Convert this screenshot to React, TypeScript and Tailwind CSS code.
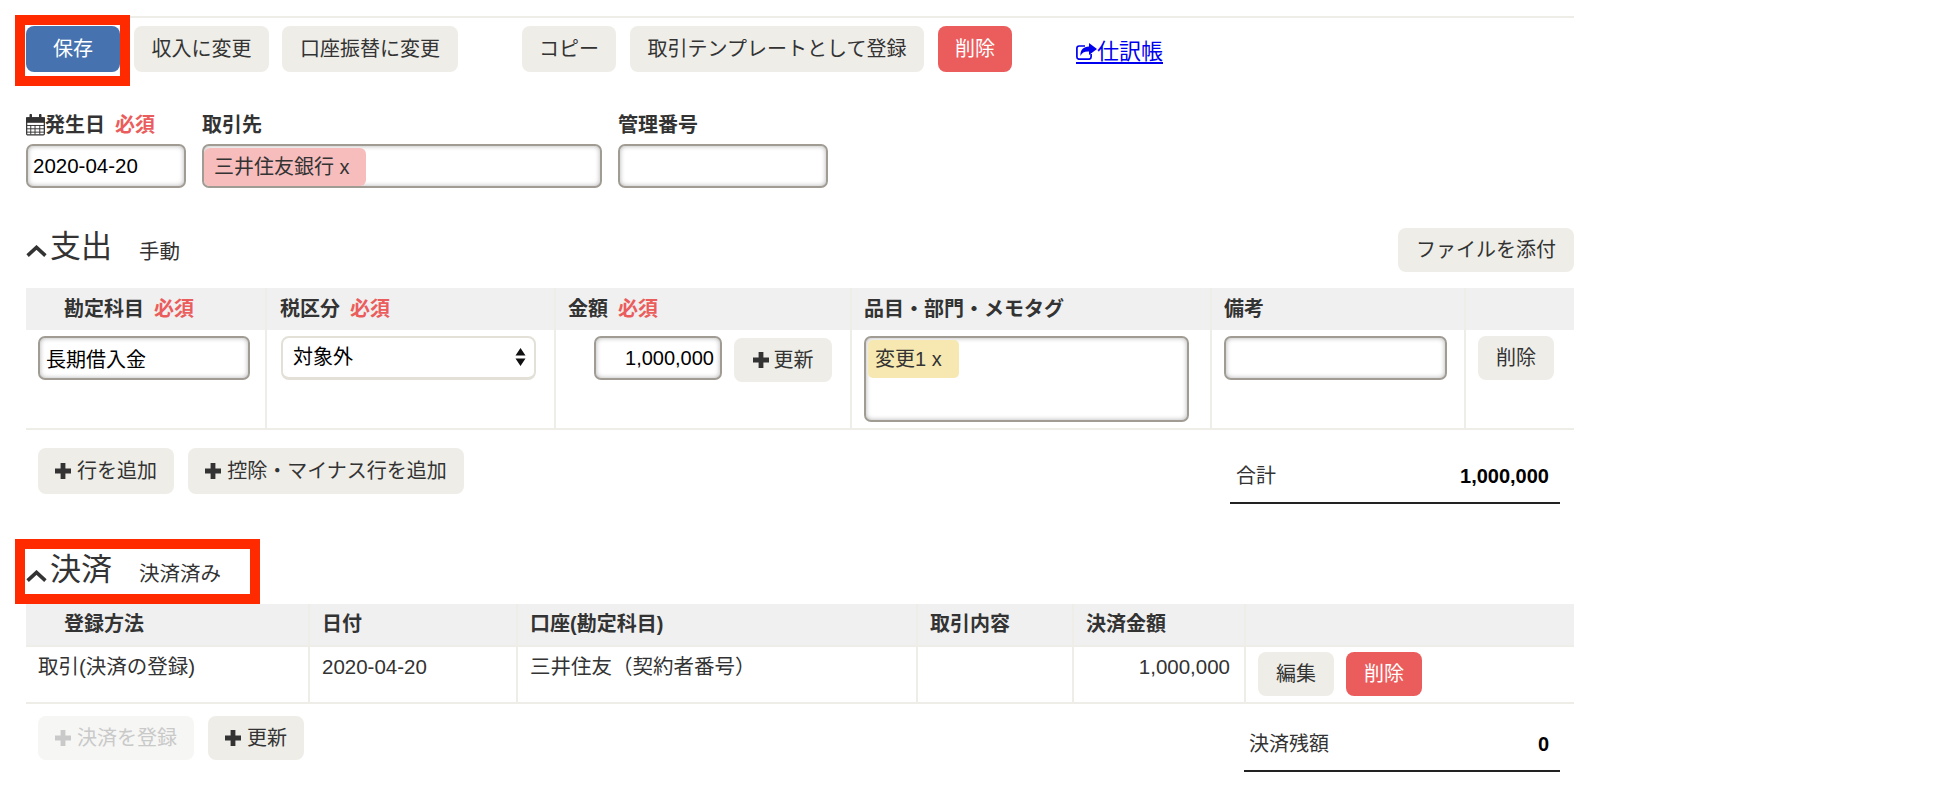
import type { ReactNode } from 'react'

const FONT = "font-['Liberation_Sans','Noto_Sans_CJK_JP',sans-serif]"
const GRAY_BTN = 'bg-[#eeede8] text-[#333333]'
const FIELD = 'border-2 border-[#a09c94] rounded-[7px] bg-white shadow-[inset_0_0_5px_rgba(0,0,0,0.3)]'

function Btn({ children, className = '', color = GRAY_BTN }: { children: ReactNode; className?: string; color?: string }) {
  return (
    <button type="button" className={`flex items-center justify-center rounded-[8px] text-[20px] leading-6 ${color} ${className}`}>
      {children}
    </button>
  )
}

function PlusIcon({ className = '' }: { className?: string }) {
  return (
    <svg width="16" height="16" viewBox="0 0 16 16" className={`shrink-0 ${className}`} fill="currentColor">
      <path d="M5.6 0h4.8v5.6H16v4.8h-5.6V16H5.6v-5.6H0V5.6h5.6z" />
    </svg>
  )
}

function ChevronUp({ className = '' }: { className?: string }) {
  return (
    <svg width="21" height="12" viewBox="0 0 21 12" className={`shrink-0 ${className}`} fill="none" stroke="#333333" strokeWidth="3.6">
      <path d="M1.6 10.6 10.5 2.4l8.9 8.2" />
    </svg>
  )
}

function CalendarIcon() {
  return (
    <svg width="19" height="22" viewBox="0 0 20 22" className="shrink-0" fill="none" stroke="#333333">
      <rect x="0.7" y="3.5" width="18.6" height="18" rx="1.2" strokeWidth="1.3" />
      <rect x="0.7" y="3.5" width="18.6" height="4.5" fill="#333333" strokeWidth="1.3" />
      <path d="M5 11v10M9.5 11v10M14.5 11v10M1 11.5h18M1 15h18M1 18.5h18" strokeWidth="1" />
      <path d="M5 0.5v5M15 0.5v5" strokeWidth="2.6" strokeLinecap="round" />
    </svg>
  )
}

function ShareIcon() {
  return (
    <svg width="21" height="17" viewBox="0 0 21 17" className="shrink-0" fill="#0000ee">
      <path d="M13 0l8 6-8 6V8.400C8.500 8.200 5.800 9.500 4.500 13 4 7 7.500 3.800 13 3.600z" />
      <path d="M9 3H3.200C1.600 3 .9 3.900.9 5.200v8.900c0 1.400.8 2.100 2.300 2.100h9.600c1.500 0 2.300-.7 2.300-2.100V11" fill="none" stroke="#0000ee" strokeWidth="1.700" />
    </svg>
  )
}

function Required() {
  return <span className="ml-[10px] font-bold text-[#eb5d5d]">必須</span>
}

function Th({ children, className = '' }: { children?: ReactNode; className?: string }) {
  return (
    <th className={`bg-[#f0f0f0] border-r-2 border-[#eeede8] last:border-r-0 pl-3 text-left align-middle font-bold text-[20px] leading-6 text-[#333333] ${className}`}>
      {children}
    </th>
  )
}

function Total({ label, value, className }: { label: string; value: string; className: string }) {
  return (
    <div className={`flex h-14 items-center justify-between border-b-2 border-[#222222] pt-[2px] text-[20px] text-[#333333] ${className}`}>
      <span>{label}</span>
      <span className="font-bold text-black">{value}</span>
    </div>
  )
}

export default function App() {
  return (
    <div className={`relative min-h-[800px] w-[1958px] bg-white pt-4 pl-[26px] ${FONT}`}>
      <div className="w-[1548px]">
        {/* toolbar */}
        <div className="flex items-start border-t-2 border-[#eeede8] pt-2">
          <Btn className="h-[46px] w-[94px]" color="bg-[#4673b0] text-white">保存</Btn>
          <Btn className="ml-[14px] h-[46px] w-[135px]">収入に変更</Btn>
          <Btn className="ml-[13px] h-[46px] w-[176px]">口座振替に変更</Btn>
          <Btn className="ml-16 h-[46px] w-[94px]">コピー</Btn>
          <Btn className="ml-[14px] h-[46px] w-[294px]">取引テンプレートとして登録</Btn>
          <Btn className="ml-[14px] h-[46px] w-[74px]" color="bg-[#eb5d5d] text-white">削除</Btn>
          <a href="#" className="ml-16 mt-[15px] flex h-[23px] items-center border-b-2 border-[#0000ee] text-[22px] leading-[21px] text-[#0000ee]">
            <ShareIcon />
            仕訳帳
          </a>
        </div>

        {/* date, partner, number */}
        <div className="mt-[41px] flex gap-4 text-[20px] text-[#333333]">
          <div className="w-[160px]">
            <div className="flex h-6 items-center font-bold leading-6">
              <CalendarIcon />
              <span>発生日</span>
              <Required />
            </div>
            <input readOnly value="2020-04-20" className={`mt-[7px] h-11 w-full pl-[5px] text-[20.5px] text-black ${FIELD}`} />
          </div>
          <div className="w-[400px]">
            <div className="h-6 font-bold leading-6">取引先</div>
            <div className={`mt-[7px] h-11 w-full pt-[2px] ${FIELD}`}>
              <span className="flex h-[38px] w-[162px] items-center rounded-[6px] bg-[#f7bdbd] pl-[10px]">三井住友銀行 x</span>
            </div>
          </div>
          <div className="w-[210px]">
            <div className="h-6 font-bold leading-6">管理番号</div>
            <input readOnly className={`mt-[7px] h-11 w-full ${FIELD}`} />
          </div>
        </div>

        {/* expense */}
        <div className="mt-10 flex h-11 items-start justify-between text-[#333333]">
          <div className="flex items-start">
            <ChevronUp className="mt-[17px]" />
            <span className="ml-[3px] text-[31px] leading-[38px]">支出</span>
            <span className="ml-[27px] mt-3 text-[20.5px] leading-6">手動</span>
          </div>
          <Btn className="h-11 w-[176px]">ファイルを添付</Btn>
        </div>

        <table className="mt-4 w-full table-fixed border-separate border-spacing-0">
          <colgroup>
            <col className="w-[241px]" />
            <col className="w-[289px]" />
            <col className="w-[296px]" />
            <col className="w-[360px]" />
            <col className="w-[254px]" />
            <col className="w-[108px]" />
          </colgroup>
          <thead>
            <tr className="h-[42px]">
              <Th className="pl-[38px]">勘定科目<Required /></Th>
              <Th className="pl-[13px]">税区分<Required /></Th>
              <Th>金額<Required /></Th>
              <Th className="text-[20.5px]">品目・部門・メモタグ</Th>
              <Th>備考</Th>
              <Th />
            </tr>
          </thead>
          <tbody className="text-[20px] text-[#333333]">
            <tr className="h-[100px]">
              <td className="border-r-2 border-b-2 border-[#eeede8] pl-3 pt-[6px] align-top">
                <input readOnly value="長期借入金" className={`h-11 w-[212px] pl-[6px] text-[20px] text-black ${FIELD}`} />
              </td>
              <td className="border-r-2 border-b-2 border-[#eeede8] pl-[14px] pt-[6px] align-top">
                <div className="flex h-11 w-[255px] items-center justify-between rounded-[8px] border-2 border-b-[3px] border-[#e3e0d8] bg-white pl-[10px] pr-[8px] pb-[2px] text-black">
                  <span>対象外</span>
                  <svg width="11" height="18" viewBox="0 0 11 18" fill="#111111">
                    <path d="M5.500 0 10.500 7.500H.5zM5.500 18 .5 10.500H10.500z" />
                  </svg>
                </div>
              </td>
              <td className="border-r-2 border-b-2 border-[#eeede8] pl-[38px] pt-[6px] align-top">
                <div className="flex items-start gap-3">
                  <input readOnly value="1,000,000" className={`h-11 w-[128px] pr-[6px] text-right text-[20px] text-black ${FIELD}`} />
                  <Btn className="mt-[2px] h-11 w-[98px] gap-[5px]">
                    <PlusIcon />
                    更新
                  </Btn>
                </div>
              </td>
              <td className="border-r-2 border-b-2 border-[#eeede8] pl-3 pt-[6px] align-top">
                <div className={`h-[86px] w-[325px] p-[2px] ${FIELD}`}>
                  <span className="flex h-[38px] w-[91px] items-center rounded-[5px] bg-[#f6e8b0] pl-[7px]">変更1 x</span>
                </div>
              </td>
              <td className="border-r-2 border-b-2 border-[#eeede8] pl-3 pt-[6px] align-top">
                <input readOnly className={`h-11 w-[223px] ${FIELD}`} />
              </td>
              <td className="border-b-2 border-[#eeede8] pl-3 pt-[6px] align-top">
                <Btn className="h-11 w-[76px]">削除</Btn>
              </td>
            </tr>
          </tbody>
        </table>

        <div className="mt-[18px] flex items-start justify-between">
          <div className="ml-3 flex gap-[14px]">
            <Btn className="h-[46px] w-[136px] gap-[6px]"><PlusIcon />行を追加</Btn>
            <Btn className="h-[46px] w-[276px] gap-[6px]"><PlusIcon />控除・マイナス行を追加</Btn>
          </div>
          <Total label="合計" value="1,000,000" className="mr-[14px] w-[330px] pl-[6px] pr-[11px]" />
        </div>

        {/* settlement */}
        <div className="mt-[51px] flex h-[49px] items-start text-[#333333]">
          <ChevronUp className="mt-[15px]" />
          <span className="ml-[3px] text-[31px] leading-[30px]">決済</span>
          <span className="ml-[27px] mt-[7px] text-[20.5px] leading-6">決済済み</span>
        </div>

        <table className="w-full table-fixed border-separate border-spacing-0">
          <colgroup>
            <col className="w-[284px]" />
            <col className="w-[208px]" />
            <col className="w-[400px]" />
            <col className="w-[156px]" />
            <col className="w-[172px]" />
            <col className="w-[328px]" />
          </colgroup>
          <thead>
            <tr className="h-[43px]">
              <Th className="border-b-2 pb-[2px] pl-[38px]">登録方法</Th>
              <Th className="border-b-2 pb-[2px]">日付</Th>
              <Th className="border-b-2 pb-[2px] text-[20.5px]">口座(勘定科目)</Th>
              <Th className="border-b-2 pb-[2px]">取引内容</Th>
              <Th className="border-b-2 pb-[2px]">決済金額</Th>
              <Th className="border-b-2" />
            </tr>
          </thead>
          <tbody className="text-[20.5px] leading-6 text-[#333333]">
            <tr className="h-[57px]">
              <td className="border-r-2 border-b-2 border-[#eeede8] pl-3 pt-2 align-top">取引(決済の登録)</td>
              <td className="border-r-2 border-b-2 border-[#eeede8] pl-3 pt-2 align-top">2020-04-20</td>
              <td className="border-r-2 border-b-2 border-[#eeede8] pl-3 pt-2 align-top">三井住友（契約者番号）</td>
              <td className="border-r-2 border-b-2 border-[#eeede8] align-top" />
              <td className="border-r-2 border-b-2 border-[#eeede8] pr-[14px] pt-2 text-right align-top">1,000,000</td>
              <td className="border-b-2 border-[#eeede8] pl-3 pt-[5px] align-top">
                <div className="flex gap-3">
                  <Btn className="h-11 w-[76px]">編集</Btn>
                  <Btn className="h-11 w-[76px]" color="bg-[#eb5d5d] text-white">削除</Btn>
                </div>
              </td>
            </tr>
          </tbody>
        </table>

        <div className="mt-3 flex items-start justify-between">
          <div className="ml-3 flex gap-[14px]">
            <Btn className="h-11 w-[156px] gap-[6px]" color="bg-[#f6f6f4] text-[#c9c9c9]"><PlusIcon />決済を登録</Btn>
            <Btn className="h-11 w-[96px] gap-[6px]"><PlusIcon />更新</Btn>
          </div>
          <Total label="決済残額" value="0" className="mr-[14px] w-[316px] pl-[5px] pr-[11px]" />
        </div>
      </div>

      {/* red annotation frames over the screenshot */}
      <div className="pointer-events-none absolute left-[15px] top-[15px] h-[71px] w-[115px] border-[10px] border-[#ff2a00]" />
      <div className="pointer-events-none absolute left-[15px] top-[539px] h-[65px] w-[245px] border-[10px] border-[#ff2a00]" />
    </div>
  )
}
